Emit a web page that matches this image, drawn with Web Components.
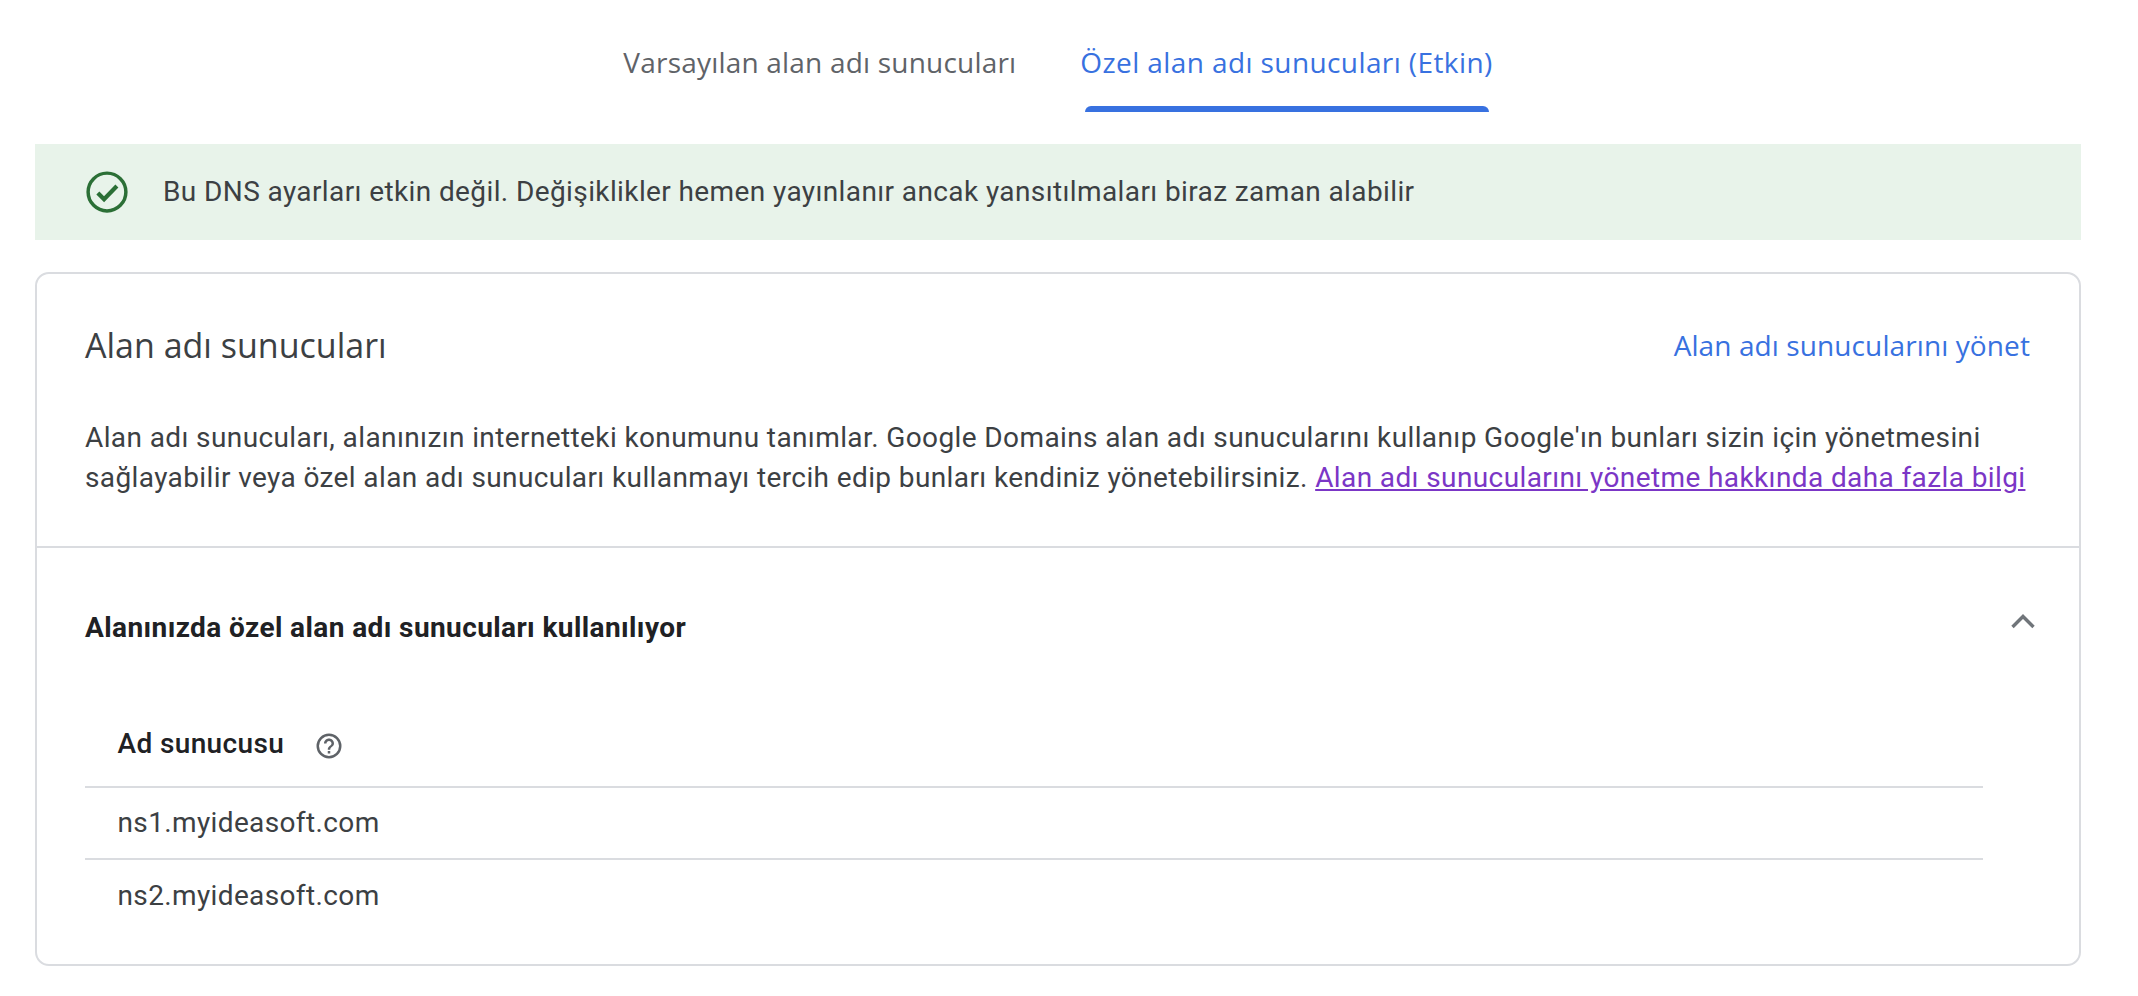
<!DOCTYPE html>
<html lang="tr"><head><meta charset="utf-8">
<style>
html,body{margin:0;padding:0;background:#fff}
body{width:2138px;height:996px;overflow:hidden;font-family:Roboto,"Liberation Sans",sans-serif;color:#3c4043}
</style></head><body>
<dns-page></dns-page>
<script>
function el(name,css,html){
  customElements.define(name,class extends HTMLElement{
    constructor(){super();this.attachShadow({mode:'open'}).innerHTML='<style>'+css+'</style>'+html;}
  });
}
el('dns-tabs',`
:host{display:flex;justify-content:center;gap:64px;height:112px;padding-right:22px;box-sizing:border-box}
.t{display:flex;flex-direction:column;align-items:center;font:500 28px/1 "Open Sans",sans-serif;letter-spacing:.2px;color:#5f6368;padding-top:48px;box-sizing:border-box;white-space:nowrap}
.t.a{color:#3871e0;letter-spacing:.4px}
.t.a i{display:block;margin-top:auto;width:404px;height:6px;background:#3871e0;border-radius:6px 6px 0 0}
`,`<div class="t">Varsayılan alan adı sunucuları</div><div class="t a">Özel alan adı sunucuları (Etkin)<i></i></div>`);
el('dns-banner',`
:host{display:flex;align-items:center;height:96px;margin:32px 57px 0 35px;background:#e8f3ea;color:#3c4043;font:400 28px/1 Roboto,sans-serif}
svg{width:44px;height:44px;margin:0 34px 0 50px;flex:none}
span{letter-spacing:.39px;white-space:nowrap}
`,`<svg viewBox="0 0 24 24" fill="none" stroke="#2b6f36" stroke-width="1.9"><circle cx="12" cy="12" r="10.3"/><path d="M7 12.5l3.4 3.4 7-7.2" stroke-width="2.3"/></svg><span>Bu DNS ayarları etkin değil. Değişiklikler hemen yayınlanır ancak yansıtılmaları biraz zaman alabilir</span>`);
el('dns-card',`
:host{display:block;box-sizing:border-box;height:694px;margin:32px 57px 0 35px;border:2px solid #dadce0;border-radius:14px;background:#fff}
`,`<slot></slot>`);
el('dns-intro',`
:host{display:block;box-sizing:border-box;height:274px;padding:0 49px 0 48px;border-bottom:2px solid #dadce0}
.h{display:flex;justify-content:space-between;align-items:center;height:141px;margin-bottom:3px}
h2{margin:0;font:400 34px/1 "Open Sans",sans-serif;letter-spacing:0;color:#3c4043}
.m{font:500 28px/1 "Open Sans",sans-serif;letter-spacing:.1px;color:#3871e0;white-space:nowrap}
p{margin:0;font:400 28px/40px Roboto,sans-serif;letter-spacing:.39px;color:#3c4043;white-space:nowrap}
a{color:#7b36c6;text-decoration:underline}
`,`<div class="h"><h2>Alan adı sunucuları</h2><span class="m">Alan adı sunucularını yönet</span></div>
<p>Alan adı sunucuları, alanınızın internetteki konumunu tanımlar. Google Domains alan adı sunucularını kullanıp Google'ın bunları sizin için yönetmesini<br>sağlayabilir veya özel alan adı sunucuları kullanmayı tercih edip bunları kendiniz yönetebilirsiniz. <a>Alan adı sunucularını yönetme hakkında daha fazla bilgi</a></p>`);
el('dns-section',`
:host{display:block;padding:0 49px 0 48px}
.s{display:flex;justify-content:space-between;height:160px;align-items:center;font:700 28px/1 Roboto,sans-serif;letter-spacing:.4px;color:#202124}
svg{width:32px;height:32px;margin:-14px -9px 0 0;flex:none}
`,`<div class="s"><span>Alanınızda özel alan adı sunucuları kullanılıyor</span><svg viewBox="0 0 32 32" fill="none" stroke="#70757a" stroke-width="3.4"><path d="M5.5 22L16 11.5 26.5 22"/></svg></div><slot></slot>`);
el('dns-table',`
:host{display:block;width:1898px}
.r{display:flex;align-items:center;padding-left:32.5px;height:72px;border-bottom:2px solid #dadce0;box-sizing:border-box;font:400 28px/1 Roboto,sans-serif;letter-spacing:.37px;color:#3c4043}
.r:last-child{border:0}
.r.h{height:80px;padding-bottom:6px;font-weight:500;color:#202124}
.r.h svg{width:30px;height:30px;margin:4px 0 0 30px}
`,`<div class="r h">Ad sunucusu<svg viewBox="0 0 24 24" fill="#5f6368"><circle cx="12" cy="12" r="9" fill="none" stroke="#5f6368" stroke-width="2"/><path d="M11 18h2v-2h-2v2zM12 6c-2.21 0-4 1.79-4 4h2c0-1.1.9-2 2-2s2 .9 2 2c0 2-3 1.75-3 5h2c0-2.25 3-2.5 3-5 0-2.21-1.79-4-4-4z"/></svg></div><div class="r">ns1.myideasoft.com</div><div class="r">ns2.myideasoft.com</div>`);
el('dns-page',`:host{display:block}`,`<dns-tabs></dns-tabs><dns-banner></dns-banner><dns-card><dns-intro></dns-intro><dns-section><dns-table></dns-table></dns-section></dns-card>`);
</script>
</body></html>
